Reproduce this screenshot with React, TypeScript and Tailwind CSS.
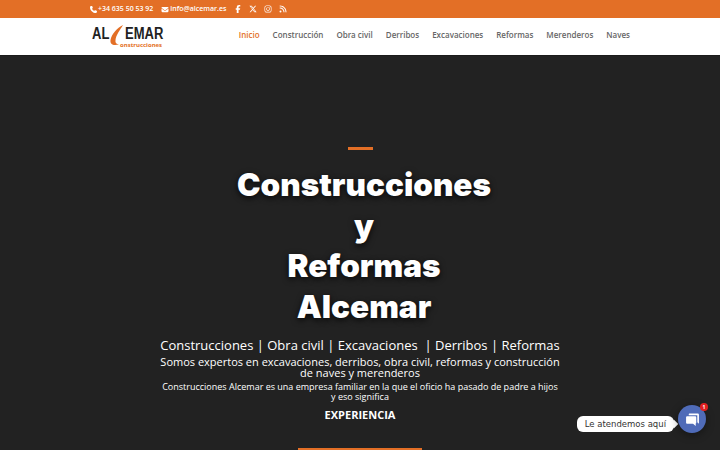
import { FaFacebookF, FaInstagram, FaRss, FaXTwitter, FaPhone, FaEnvelope } from "react-icons/fa6";

const NAV = ["Construcción", "Obra civil", "Derribos", "Excavaciones", "Reformas", "Merenderos", "Naves"];

function Logo() {
  return (
    <div className="relative h-[24px] w-[74px]">
      <span className="absolute left-0 top-[2px] scale-y-[1.2] font-['Liberation_Sans',sans-serif] text-[13px] font-bold leading-[14px] text-[#222]">
        AL
      </span>
      <span className="absolute left-[33px] top-[2px] scale-y-[1.2] font-['Liberation_Sans',sans-serif] text-[13px] font-bold leading-[14px] text-[#222]">
        EMAR
      </span>
      <svg className="absolute left-[17px] top-0" width="16" height="21" viewBox="0 0 16 21">
        <path d="M14 0 C8 3 2.500 9 1.500 15 C1 19.500 4 20.800 10 19.500 C7.500 19 6 18 6.500 15 C7 10 11 5 14 0Z" fill="#e36f26" />
      </svg>
      <span className="absolute left-[28px] top-[17px] font-['Open_Sans',sans-serif] text-[6px] font-bold leading-[7px] text-[#e36f26]">
        onstrucciones
      </span>
    </div>
  );
}

export default function App() {
  return (
    <div className="flex h-[450px] w-[720px] flex-col overflow-hidden bg-[#222] font-['Open_Sans',sans-serif]">
      <div className="flex h-[18px] shrink-0 items-center bg-[#e36f26] pl-[90px] text-[7px] font-semibold text-white">
        <FaPhone className="mr-[1px] h-[7px] w-[7px]" />
        <span>+34 635 50 53 92</span>
        <FaEnvelope className="ml-[8px] mr-[1px] h-[7px] w-[8px]" />
        <span>info@alcemar.es</span>
        <div className="ml-[8px] flex items-center gap-[7px]">
          <FaFacebookF className="h-[8px] w-[8px]" />
          <FaXTwitter className="h-[8px] w-[8px]" />
          <FaInstagram className="h-[8px] w-[8px]" />
          <FaRss className="h-[8px] w-[8px]" />
        </div>
      </div>

      <header className="flex h-[37px] shrink-0 items-center justify-between bg-white pl-[92px] pr-[90px] shadow-[0_1px_0_rgba(0,0,0,0.2)]">
        <Logo />
        <nav className="mb-[3px] flex gap-[13px] text-[8px] font-semibold text-[#666]">
          <a className="text-[#e36f26]">Inicio</a>
          {NAV.map((item) => (
            <a key={item}>{item}</a>
          ))}
        </nav>
      </header>

      <main className="relative flex min-h-0 flex-1 flex-col items-center pt-[92px] text-center text-white">
        <div className="h-[3px] w-[25px] shrink-0 bg-[#e36f26]" />
        <h1 className="ml-[8px] mt-[15px] font-['Inter',sans-serif] text-[31.500px] font-black leading-[40.500px] [text-shadow:0_2px_6px_rgba(0,0,0,0.8)]">
          Construcciones
          <br />y
          <br />
          Reformas
          <br />
          Alcemar
        </h1>
        <p className="mt-[8px] text-[13px] leading-[20px]">Construcciones | Obra civil | Excavaciones &nbsp;| Derribos | Reformas</p>
        <p className="mt-[1px] w-[404px] text-[11px] leading-[11px]">
          Somos expertos en excavaciones, derribos, obra civil, reformas y construcción de naves y merenderos
        </p>
        <p className="mt-[4px] w-[402px] text-[9px] leading-[9.500px]">
          Construcciones Alcemar es una empresa familiar en la que el oficio ha pasado de padre a hijos y eso significa
        </p>
        <p className="mt-[6px] text-[11px] font-bold leading-[16px]">EXPERIENCIA</p>
        <div className="mt-[25px] h-[10px] w-[124px] shrink-0 bg-[#e36f26]" />

        <div className="absolute bottom-[17px] right-[14px] flex items-end">
          <span className="relative mb-[1px] mr-[4px] rounded-[6px] bg-white px-[8px] py-[1px] font-['DejaVu_Sans',sans-serif] text-[8.500px] leading-[14px] text-[#333]">
            Le atendemos aquí
            <span className="absolute right-[-3px] top-[5px] h-[6px] w-[6px] rotate-45 bg-white" />
          </span>
          <div className="relative flex h-[28px] w-[28px] items-center justify-center rounded-full bg-[#4f6bb8] shadow-[0_2px_8px_rgba(0,0,0,0.4)]">
            <svg width="15" height="15" viewBox="0 0 14 14" fill="white">
              <path d="M4 1.500 H12 a1 1 0 0 1 1 1 V11 L11.500 9.500 V3 H3.500 V2 a1 1 0 0 1 .5 -.5Z" />
              <path d="M2 4 H9.500 a1 1 0 0 1 1 1 V10 a1 1 0 0 1 -1 1 H10 V13 L7.500 11 H2 a1 1 0 0 1 -1 -1 V5 a1 1 0 0 1 1 -1Z" />
            </svg>
            <span className="absolute right-[-2px] top-[-2px] flex h-[8px] w-[8px] items-center justify-center rounded-full bg-[#e02020] text-[5px] font-bold leading-none text-white">
              1
            </span>
          </div>
        </div>
      </main>
    </div>
  );
}
